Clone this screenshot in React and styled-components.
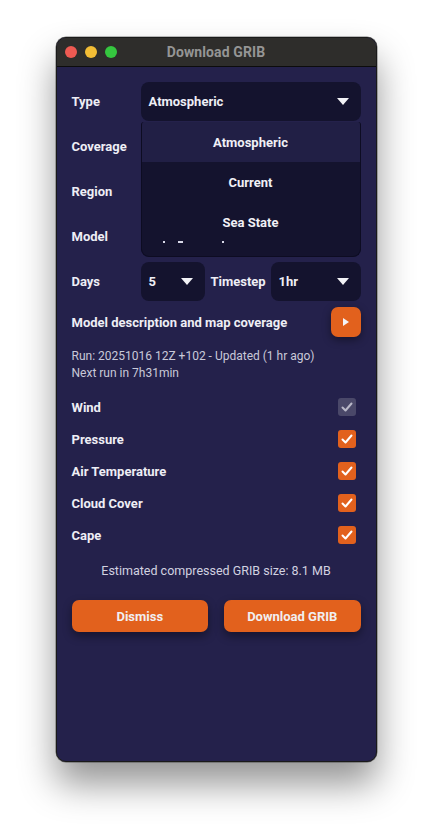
import React from 'react'
import styled, { createGlobalStyle } from 'styled-components'

const GlobalStyle = createGlobalStyle`
  html, body {
    margin: 0;
    padding: 0;
    background: #ffffff;
  }
  body {
    font-family: Roboto, "Noto Sans", sans-serif;
  }
`

const Page = styled.div`
  display: flex;
  justify-content: center;
  padding-top: 37px;
  height: 836px;
  box-sizing: border-box;
`

const Window = styled.div`
  width: 321px;
  height: 725px;
  display: flex;
  flex-direction: column;
  border-radius: 10px;
  overflow: hidden;
  background: #24214b;
  border: 1px solid #1a1a1a;
  box-sizing: border-box;
  box-shadow: 0 22px 36px rgba(0, 0, 0, 0.42), 0 0 0 0.5px rgba(0, 0, 0, 0.5);
`

const TitleBar = styled.div`
  height: 28px;
  flex: none;
  display: grid;
  grid-template-columns: 1fr auto 1fr;
  align-items: center;
  background: #2e2d2b;
  border-bottom: 1px solid #0c0c0c;
  padding: 0 8px;
`

const Lights = styled.div`
  display: flex;
  gap: 8px;
`

const Light = styled.span`
  width: 12px;
  height: 12px;
  border-radius: 50%;
  background: ${({ color }) => color};
`

const Title = styled.div`
  color: #959595;
  font-size: 14px;
  font-weight: 700;
  letter-spacing: 0.1px;
`

const Content = styled.div`
  padding: 15px 15px 0 15px;
  display: flex;
  flex-direction: column;
`

const Form = styled.div`
  position: relative;
  display: grid;
  grid-template-columns: 69px 1fr;
  grid-auto-rows: 39px;
  row-gap: 6px;
  align-items: center;
`

const Label = styled.div`
  color: #eeeef5;
  font-size: 13px;
  font-weight: 700;
  padding-left: ${({ pad }) => pad || 0}px;
`

const Select = styled.div`
  height: 39px;
  display: flex;
  align-items: center;
  justify-content: space-between;
  padding: 0 12px 0 8px;
  box-sizing: border-box;
  border-radius: 8px;
  background: #14132e;
  color: #eeeef5;
  font-size: 13px;
  font-weight: 700;
`

const Arrow = styled.span`
  width: 0;
  height: 0;
  border-left: 6px solid transparent;
  border-right: 6px solid transparent;
  border-top: 7px solid #f2f2f6;
`

const Popup = styled.div`
  position: absolute;
  top: 40px;
  left: 69px;
  right: 0;
  height: 135px;
  background: #14132e;
  border-radius: 3px 3px 8px 8px;
  border: 1px solid #0d0c22;
  border-top: none;
  box-sizing: border-box;
  overflow: hidden;
  display: flex;
  flex-direction: column;
`

const Option = styled.div`
  height: 40px;
  flex: none;
  display: flex;
  align-items: center;
  justify-content: center;
  color: #f0f0f6;
  font-size: 13px;
  font-weight: 700;
  background: ${({ active }) => (active ? '#211f45' : 'transparent')};
`

const Clipped = styled.div`
  height: 2px;
  position: relative;
  margin-top: -1px;
`

const Mark = styled.span`
  position: absolute;
  top: 0;
  height: 2px;
  background: #d8d8e8;
  left: ${({ x }) => x}px;
  width: ${({ w }) => w}px;
`

const DaysRow = styled.div`
  display: grid;
  grid-template-columns: 69px 64px 1fr 90px;
  align-items: center;
  margin-top: 6px;
  height: 39px;
`

const DescRow = styled.div`
  display: flex;
  align-items: center;
  justify-content: space-between;
  margin-top: 6px;
  height: 30px;
`

const PlayButton = styled.div`
  width: 30px;
  height: 30px;
  border-radius: 7px;
  background: #e2611d;
  display: flex;
  align-items: center;
  justify-content: center;
  box-shadow: 0 3px 9px rgba(0, 0, 0, 0.4);
`

const PlayIcon = styled.span`
  width: 0;
  height: 0;
  border-top: 4px solid transparent;
  border-bottom: 4px solid transparent;
  border-left: 6px solid #f4f4f8;
  margin-left: 1px;
`

const RunInfo = styled.div`
  margin-top: 11px;
  color: #c9c9d9;
  font-size: 12px;
  line-height: 17px;
`

const Checks = styled.div`
  margin-top: 9px;
  display: flex;
  flex-direction: column;
`

const CheckRow = styled.div`
  height: 32px;
  display: flex;
  align-items: center;
  justify-content: space-between;
  padding-right: 5px;
`

const Box = styled.span`
  width: 18px;
  height: 18px;
  border-radius: 3px;
  display: flex;
  align-items: center;
  justify-content: center;
  background: ${({ disabled }) => (disabled ? '#4a4869' : '#e2611d')};
`

const Estimate = styled.div`
  margin-top: 11px;
  text-align: center;
  color: #d2d2e0;
  font-size: 12.5px;
  line-height: 17px;
`

const Buttons = styled.div`
  margin-top: 21px;
  display: grid;
  grid-template-columns: 1fr 1fr;
  gap: 16px;
`

const Button = styled.div`
  height: 32px;
  border-radius: 7px;
  background: #e2611d;
  color: #f1eef0;
  font-size: 13px;
  font-weight: 700;
  display: flex;
  align-items: center;
  justify-content: center;
  box-shadow: 0 4px 10px rgba(0, 0, 0, 0.4);
`

const Check = ({ disabled }) => (
  <Box disabled={disabled}>
    <svg width="14" height="14" viewBox="0 0 14 14">
      <polyline
        points="2.5,7.5 5.5,10.5 11.5,3.5"
        fill="none"
        stroke={disabled ? '#b9b8c8' : '#ffffff'}
        strokeWidth="2"
        strokeLinecap="round"
        strokeLinejoin="round"
      />
    </svg>
  </Box>
)

const layers = [
  { name: 'Wind', disabled: true },
  { name: 'Pressure' },
  { name: 'Air Temperature' },
  { name: 'Cloud Cover' },
  { name: 'Cape' },
]

export default function App() {
  return (
    <>
      <GlobalStyle />
      <Page>
        <Window>
          <TitleBar>
            <Lights>
              <Light color="#ee5a52" />
              <Light color="#f2bd35" />
              <Light color="#35c63f" />
            </Lights>
            <Title>Download GRIB</Title>
            <div />
          </TitleBar>
          <Content>
            <Form>
              <Label>Type</Label>
              <Select>
                Atmospheric
                <Arrow />
              </Select>
              <Label>Coverage</Label>
              <Select />
              <Label>Region</Label>
              <Select />
              <Label>Model</Label>
              <Select />
              <Popup>
                <Option active>Atmospheric</Option>
                <Option>Current</Option>
                <Option>Sea State</Option>
                <Clipped>
                  <Mark x={21} w={2} />
                  <Mark x={36} w={5} />
                  <Mark x={80} w={2} />
                </Clipped>
              </Popup>
            </Form>
            <DaysRow>
              <Label>Days</Label>
              <Select>
                5
                <Arrow />
              </Select>
              <Label pad={6}>Timestep</Label>
              <Select>
                1hr
                <Arrow />
              </Select>
            </DaysRow>
            <DescRow>
              <Label>Model description and map coverage</Label>
              <PlayButton>
                <PlayIcon />
              </PlayButton>
            </DescRow>
            <RunInfo>
              Run: 20251016 12Z +102 - Updated (1 hr ago)
              <br />
              Next run in 7h31min
            </RunInfo>
            <Checks>
              {layers.map((l) => (
                <CheckRow key={l.name}>
                  <Label>{l.name}</Label>
                  <Check disabled={l.disabled} />
                </CheckRow>
              ))}
            </Checks>
            <Estimate>Estimated compressed GRIB size: 8.1 MB</Estimate>
            <Buttons>
              <Button>Dismiss</Button>
              <Button>Download GRIB</Button>
            </Buttons>
          </Content>
        </Window>
      </Page>
    </>
  )
}
